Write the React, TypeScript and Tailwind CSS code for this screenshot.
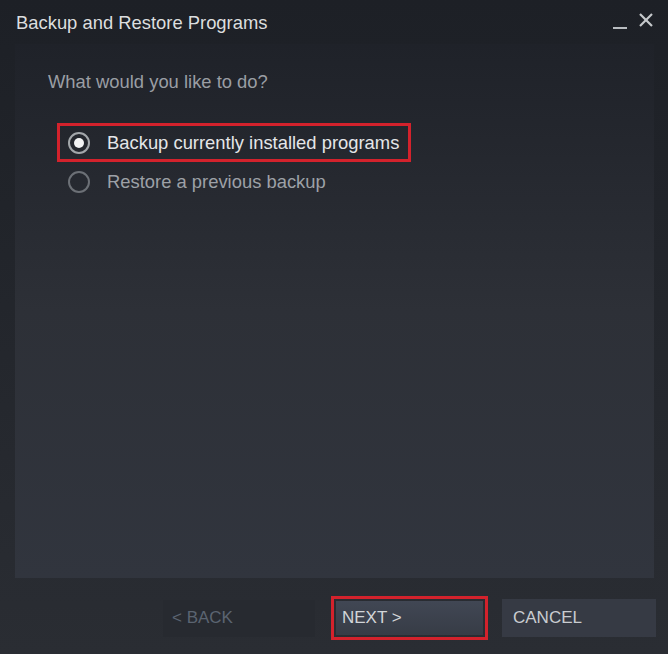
export default function App() {
  return (
    <div
      className="w-[668px] h-[654px] flex flex-col bg-gradient-to-b from-[#1d2026] to-[#2a2d33] text-[18.4px]"
      style={{ fontFamily: '"Liberation Sans", Arial, sans-serif' }}
    >
      {/* Title bar */}
      <div className="h-[44px] flex items-center justify-between pl-[16px] pr-[14px]">
        <div className="text-[#dcdedf] pt-[1px]">Backup and Restore Programs</div>
        <div className="flex items-center gap-[10px] self-start pt-[11px]">
          <svg width="16" height="18" viewBox="0 0 16 18">
            <line x1="1" y1="17" x2="15" y2="17" stroke="#b8bcc0" strokeWidth="2" />
          </svg>
          <svg width="16" height="16" viewBox="0 0 16 16">
            <line x1="2" y1="2" x2="14" y2="14" stroke="#c6c9cc" strokeWidth="2.2" />
            <line x1="14" y1="2" x2="2" y2="14" stroke="#c6c9cc" strokeWidth="2.2" />
          </svg>
        </div>
      </div>

      {/* Content panel */}
      <div className="ml-[15px] mr-[14px] flex-1 bg-gradient-to-b from-[#1f2229] via-[#2d3037] to-[#31353e] pt-[25px]">
        <div className="pl-[33px] text-[#9a9ea4] leading-[26px]">What would you like to do?</div>
        <div className="mt-[28px] ml-[42px] flex flex-col items-start">
          <div className="flex items-center h-[39px] border-[3px] border-[#d3222c] pl-[8px] pr-[9px] gap-[17px]">
            <span className="w-[22px] h-[22px] rounded-full border-2 border-[#a3a7ab] flex items-center justify-center">
              <span className="w-[10px] h-[10px] rounded-full bg-[#f2f3f4]" />
            </span>
            <span className="text-[#e4e6e8]">Backup currently installed programs</span>
          </div>
          <div className="flex items-center h-[40px] pl-[11px] gap-[17px]">
            <span className="w-[22px] h-[22px] rounded-full border-2 border-[#6c7076]" />
            <span className="text-[#9da1a7]">Restore a previous backup</span>
          </div>
        </div>
      </div>

      {/* Footer buttons */}
      <div className="h-[76px] flex items-center justify-end pr-[12px] pt-[4px]">
        <button className="w-[152px] h-[37px] bg-[#272a30] text-left pl-[9px] text-[#5b6471] text-[17px]">
          &lt; BACK
        </button>
        <div className="ml-[16px] border-[3px] border-[#d3222c] p-[2px]">
          <button className="w-[147px] h-[34px] bg-gradient-to-b from-[#414754] to-[#373c46] text-left pl-[6px] text-[#d2d5d8] text-[17px]">
            NEXT &gt;
          </button>
        </div>
        <button className="ml-[14px] w-[154px] h-[38px] bg-[#363a44] text-left pl-[11px] text-[#c9ccd0] text-[17px]">
          CANCEL
        </button>
      </div>
    </div>
  );
}
